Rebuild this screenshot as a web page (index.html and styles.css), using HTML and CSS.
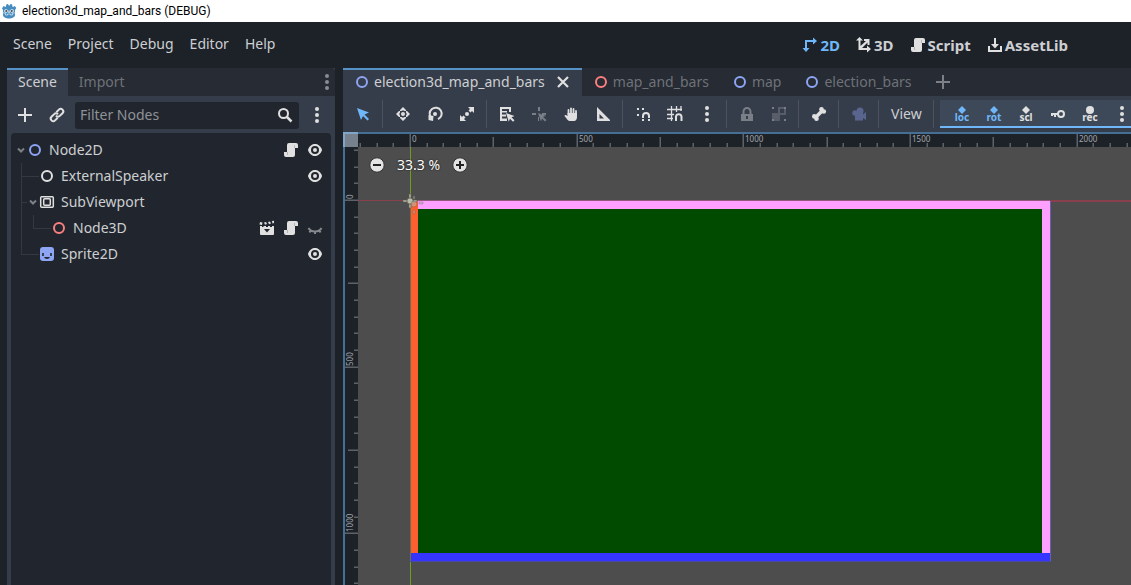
FILE: index.html
```html
<!DOCTYPE html>
<html lang="en">
<head>
<meta charset="utf-8">
<title>election3d_map_and_bars (DEBUG)</title>
<link rel="stylesheet" href="styles.css">
</head>
<body>
<svg class="defs" aria-hidden="true">
  <symbol id="ring" viewBox="0 0 16 16"><circle cx="8" cy="8" r="5" fill="none" stroke="currentColor" stroke-width="2"/></symbol>
  <symbol id="dots" viewBox="0 0 16 16"><g fill="currentColor"><circle cx="8" cy="2" r="2"/><circle cx="8" cy="8" r="2"/><circle cx="8" cy="14" r="2"/></g></symbol>
  <symbol id="plus" viewBox="0 0 16 16"><path d="M7 1h2v6h6v2H9v6H7V9H1V7h6z" fill="currentColor"/></symbol>
  <symbol id="eye" viewBox="0 0 16 16"><path fill="currentColor" fill-rule="evenodd" d="M8 2C5.443 2 2.209 3.948 1.045 7.705a1 1 0 0 0-.014.564C2.168 12.142 5.45 14 8 14s5.832-1.858 6.97-5.73a1 1 0 0 0 0-.541C13.83 3.87 10.556 2 8 2zm0 2a4 4 0 0 1 4 4 4 4 0 0 1-4 4 4 4 0 0 1-4-4 4 4 0 0 1 4-4zm0 2a2 2 0 0 0-2 2 2 2 0 0 0 2 2 2 2 0 0 0 2-2 2 2 0 0 0-2-2z"/></symbol>
  <symbol id="eye-off" viewBox="0 0 16 16"><path fill="none" stroke="currentColor" stroke-width="2" d="M1.500 8C4 12.500 12 12.500 14.500 8M4 9.500L2.500 12.500M12 9.500l1.500 3M8 11v3"/></symbol>
  <symbol id="script" viewBox="0 0 16 16"><path fill="currentColor" d="M6 1a2 2 0 0 0-2 2v7H1v3a2 2 0 0 0 2 2h7a2 2 0 0 0 2-2V6h3V3a2 2 0 0 0-2-2z"/><path d="M4.500 10v3M11.500 3v3" stroke="#b4b6b8" stroke-width="1"/></symbol>
  <symbol id="clapper" viewBox="0 0 16 16"><path fill="currentColor" d="M1 2l2.500.5-.5 2.500L.5 4.500zM5 2.500l2-.5 1 2-2 .7zM9 2l2-.5 1 2-2 .7zM13 1l2-.3V3l-1.500.5zM1 6h14v8a1 1 0 0 1-1 1H2a1 1 0 0 1-1-1z"/><path fill="#21262e" d="M3 6h2l-1 1H3zM7 6h2v1H7zM11 6h2v1h-2zM5 9h6l-3 3.500z"/></symbol>
  <symbol id="arrow" viewBox="0 0 14 14"><path d="M4 5.500l3 3 3-3" fill="none" stroke="currentColor" stroke-width="2"/></symbol>
  <symbol id="pointer" viewBox="0 0 16 16"><path fill="currentColor" d="M2 2l12 4.500-4.500 2L14 13l-1.500 1.500L8 10l-2 4z"/></symbol>
</svg>

<header class="titlebar">
  <svg class="logo" viewBox="0 0 16 16"><path fill="#478cbf" d="M1 5.500L2.500 3l2 1L5 3.500 5.200 1.500 7 1l.8 1.500h.8L9.500 1l1.700.5.2 2 .6.5 1.800-1L15.300 5 14 7v5c0 2-3 3.500-6 3.500S2 14 2 12V7z"/><path d="M1.500 9.500l3 1v1.500h2v-1h3v1h2v-1.500l3-1" stroke="#d4e5f2" fill="none" stroke-width=".8"/><circle cx="5" cy="8" r="1.800" fill="#fff"/><circle cx="11" cy="8" r="1.800" fill="#fff"/><circle cx="5.200" cy="8" r="1" fill="#414042"/><circle cx="10.800" cy="8" r="1" fill="#414042"/><path d="M8 7.500V10" stroke="#fff"/></svg>
  <span>election3d_map_and_bars (DEBUG)</span>
</header>

<div class="topbar">
  <nav class="menus">
    <button>Scene</button><button>Project</button><button>Debug</button><button>Editor</button><button>Help</button>
  </nav>
  <div class="modes">
    <button class="active"><svg class="icon" viewBox="0 0 16 16"><path fill="currentColor" d="M3 3h8V.5L15 4l-4 3.500V5H5v6h2.500L4 15 .5 11H3z"/></svg>2D</button>
    <button><svg class="icon" viewBox="0 0 16 16"><path fill="currentColor" d="M3.500 0L7 3.500H4.500v5.600L10 4H8V2h5.500v6h-2V5.500L6 11h5V8.500l4 3.500-4 3.500V13H2.500V3.500H0z"/></svg>3D</button>
    <button><svg class="icon"><use href="#script"/></svg>Script</button>
    <button><svg class="icon" viewBox="0 0 16 16"><path fill="currentColor" d="M7 1h2v6h3l-4 4.500L4 7h3zM1 9h2v4h10V9h2v6H1z"/></svg>AssetLib</button>
  </div>
</div>

<main class="workspace">
  <section class="dock">
    <div class="tabs">
      <button class="tab selected">Scene</button>
      <button class="tab">Import</button>
      <button class="tabs-menu" aria-label="Dock options"><svg class="icon"><use href="#dots"/></svg></button>
    </div>
    <div class="dock-tools">
      <button class="tool" aria-label="Add node"><svg class="icon"><use href="#plus"/></svg></button>
      <button class="tool" aria-label="Instance scene"><svg class="icon" viewBox="0 0 16 16"><g fill="none" stroke="currentColor" stroke-width="2"><path d="M7.300 5.200l2.600-2.600a2.500 2.500 0 0 1 3.600 3.600l-2.700 2.700a2.500 2.500 0 0 1-3.800-.2"/><path d="M8.700 10.800l-2.600 2.600a2.500 2.500 0 0 1-3.600-3.600l2.700-2.700a2.500 2.500 0 0 1 3.800.2"/></g></svg></button>
      <label class="filter"><input type="text" placeholder="Filter Nodes" aria-label="Filter Nodes"><svg class="icon" viewBox="0 0 16 16"><circle cx="6.500" cy="6.500" r="4.500" fill="none" stroke="currentColor" stroke-width="2"/><path d="M9.500 9.500l5 5" stroke="currentColor" stroke-width="2.500"/></svg></label>
      <button class="tool" aria-label="Scene options"><svg class="icon"><use href="#dots"/></svg></button>
    </div>
    <ul class="tree">
      <li>
        <div class="row"><svg class="fold"><use href="#arrow"/></svg><svg class="icon blue"><use href="#ring"/></svg><span>Node2D</span><svg class="icon"><use href="#script"/></svg><svg class="icon"><use href="#eye"/></svg></div>
        <ul>
          <li><div class="row"><i class="fold"></i><svg class="icon"><use href="#ring"/></svg><span>ExternalSpeaker</span><svg class="icon"><use href="#eye"/></svg></div></li>
          <li class="parent">
            <div class="row"><svg class="fold"><use href="#arrow"/></svg><svg class="icon" viewBox="0 0 16 16"><g fill="none" stroke="currentColor" stroke-width="1.500"><rect x="1.700" y="2.700" width="12.600" height="10.600" rx="1"/><rect x="4.700" y="4.700" width="6.600" height="6.600" rx="1"/></g></svg><span>SubViewport</span></div>
            <ul>
              <li><div class="row"><i class="fold"></i><svg class="icon red"><use href="#ring"/></svg><span>Node3D</span><svg class="icon"><use href="#clapper"/></svg><svg class="icon"><use href="#script"/></svg><svg class="icon dim"><use href="#eye-off"/></svg></div></li>
            </ul>
          </li>
          <li><div class="row"><i class="fold"></i><svg class="icon blue" viewBox="0 0 16 16"><rect x="1" y="1" width="14" height="14" rx="3" fill="currentColor"/><path d="M4 7v3M12 7v3" stroke="#21262e" stroke-width="1.600"/><path d="M5 11c1 2.500 5 2.500 6 0z" fill="#21262e"/></svg><span>Sprite2D</span><svg class="icon"><use href="#eye"/></svg></div></li>
        </ul>
      </li>
    </ul>
  </section>

  <section class="editor">
    <div class="tabs">
      <button class="tab selected"><svg class="icon blue"><use href="#ring"/></svg>election3d_map_and_bars<svg class="icon close" viewBox="0 0 16 16"><path d="M3 3l10 10M13 3L3 13" stroke="currentColor" stroke-width="2.200"/></svg></button>
      <button class="tab"><svg class="icon red"><use href="#ring"/></svg>map_and_bars</button>
      <button class="tab"><svg class="icon blue"><use href="#ring"/></svg>map</button>
      <button class="tab"><svg class="icon blue"><use href="#ring"/></svg>election_bars</button>
      <button class="tab" aria-label="New tab"><svg class="icon"><use href="#plus"/></svg></button>
    </div>
    <div class="tools">
      <button class="tool on" aria-label="Select"><svg class="icon"><use href="#pointer"/></svg></button>
      <hr>
      <button class="tool" aria-label="Move"><svg class="icon" viewBox="0 0 16 16"><g fill="currentColor"><circle cx="8" cy="8" r="2"/><path d="M8 1l3 3v1H9.500L8 4.200 6.500 5H5V4zM8 15l-3-3v-1h1.500l1.500.8 1.500-.8H11v1zM1 8l3-3h1v1.500L4.200 8 5 9.500V11H4zM15 8l-3 3h-1V9.500l.8-1.500-.8-1.500V5h1z"/></g></svg></button>
      <button class="tool" aria-label="Rotate"><svg class="icon" viewBox="0 0 16 16"><path d="M4.500 12A6 6 0 1 1 11 13.200" fill="none" stroke="currentColor" stroke-width="2"/><path d="M1.500 9l5 1-.5 5-4.500-1z" fill="currentColor"/><circle cx="8" cy="8" r="2" fill="currentColor"/></svg></button>
      <button class="tool" aria-label="Scale"><svg class="icon" viewBox="0 0 16 16"><g fill="currentColor"><circle cx="8" cy="8" r="2"/><path d="M9 1h6v6l-2-2-1.500 1.500-2-2L11 3zM7 15H1V9l2 2 1.500-1.500 2 2L5 13z"/></g></svg></button>
      <hr>
      <button class="tool" aria-label="List select"><svg class="icon" viewBox="0 0 16 16"><path fill="currentColor" d="M1 1h11v2H1zM1 3h2v12H1zM10 3h2v3h-2zM3 5h5v1.500H3zM3 8.500h4v2H3zM3 12.500h5V15H3z"/><path d="M7 7l8.500 3-3 1.200 3 3-1.500 1.500-3-3-1.200 3z" fill="currentColor"/></svg></button>
      <button class="tool off" aria-label="Pivot"><svg class="icon" viewBox="0 0 16 16"><path fill="currentColor" d="M7 1h2v4H7zM1 7h4v2H1zM11 7h4v2h-4zM7 11h1v4H7zM7 7l8 3-3 1 3.500 3-1.500 1.500-3-3-1 3z"/></svg></button>
      <button class="tool" aria-label="Pan"><svg class="icon" viewBox="0 0 16 16"><path d="M5.500 8V4M8 8V2.500M10.500 8V3M13 8.500V5" stroke="currentColor" stroke-width="1.800" stroke-linecap="round"/><path fill="currentColor" d="M4.500 7H14v4c0 2-1 4-3 4H7c-2 0-3-2-5.500-5 0-1.500 1.500-1.500 3 0z"/></svg></button>
      <button class="tool" aria-label="Ruler"><svg class="icon" viewBox="0 0 16 16"><path fill="currentColor" fill-rule="evenodd" d="M2 1l13 13v1H2zM4.500 8v4.500H9z"/></svg></button>
      <hr>
      <button class="tool" aria-label="Smart snap"><svg class="icon" viewBox="0 0 16 16"><path fill="currentColor" d="M2 2h2v2H2zM7 2h2v2H7zM2 8h2v2H2zM7 13h2v2H7zM13 13h2v2h-2z"/><path d="M8 12v-2a3 3 0 0 1 6 0v2" fill="none" stroke="currentColor" stroke-width="2"/></svg></button>
      <button class="tool" aria-label="Grid snap"><svg class="icon" viewBox="0 0 16 16"><path d="M4.500 0v15M9.500 0v6M14 0v5M0 3.500h15M0 8.500h7M0 12.500h6" stroke="currentColor" stroke-width="1.300"/><path d="M9 15v-4.500a2.800 2.800 0 0 1 5.500 0V15" fill="none" stroke="currentColor" stroke-width="2"/></svg></button>
      <button class="tool" aria-label="Snap options"><svg class="icon"><use href="#dots"/></svg></button>
      <hr>
      <button class="tool off" aria-label="Lock"><svg class="icon" viewBox="0 0 16 16"><path fill="currentColor" fill-rule="evenodd" d="M8 1a4.500 4.500 0 0 0-4.500 5v2H2v7h12V8h-1.500V6A4.500 4.500 0 0 0 8 1zm0 2a2.500 2.500 0 0 1 2.500 3v2h-5V6A2.500 2.500 0 0 1 8 3zm-1 7h2v3H7z"/></svg></button>
      <button class="tool off" aria-label="Group"><svg class="icon" viewBox="0 0 16 16"><path fill="currentColor" fill-rule="evenodd" opacity=".5" d="M7 1h6v2h2v6H9v6H3v-2H1V7h6zM9 3v4h4V3z"/><path fill="currentColor" d="M1 1h2v2H1zM13 1h2v2h-2zM1 13h2v2H1zM13 13h2v2h-2z"/></svg></button>
      <hr>
      <button class="tool" aria-label="Skeleton"><svg class="icon" viewBox="0 0 16 16"><path d="M4.500 11.500l7-7" stroke="currentColor" stroke-width="3.500"/><g fill="currentColor"><circle cx="3.300" cy="10.400" r="2.300"/><circle cx="5.500" cy="12.800" r="2.300"/><circle cx="10.500" cy="3.200" r="2.300"/><circle cx="12.800" cy="5.500" r="2.300"/></g></svg></button>
      <hr>
      <button class="tool camera" aria-label="Override camera"><svg class="icon" viewBox="0 0 16 16"><g fill="currentColor"><circle cx="9" cy="5" r="3.500"/><circle cx="4" cy="7" r="2.700"/><path d="M4 7h8v1.500L15 6v8l-3-2v2.500H4z"/></g></svg></button>
      <hr>
      <button class="view">View</button>
      <hr>
      <div class="keying">
        <button class="tool on" aria-label="Insert location"><svg class="icon" viewBox="0 0 16 16"><path d="M8 0l4 4-4 4-4-4z" fill="currentColor"/><text x="8" y="15">loc</text></svg></button>
        <button class="tool on" aria-label="Insert rotation"><svg class="icon" viewBox="0 0 16 16"><path d="M8 0l4 4-4 4-4-4z" fill="currentColor"/><text x="8" y="15">rot</text></svg></button>
        <button class="tool" aria-label="Insert scale"><svg class="icon" viewBox="0 0 16 16"><path d="M8 0l4 4-4 4-4-4z" fill="currentColor"/><text x="8" y="15">scl</text></svg></button>
        <button class="tool" aria-label="Insert key"><svg class="icon" viewBox="0 0 16 16"><circle cx="11" cy="8" r="3" fill="none" stroke="currentColor" stroke-width="2"/><path fill="currentColor" d="M1 7h7v2H6v2H4V9H3v1H1z"/></svg></button>
        <button class="tool" aria-label="Auto record"><svg class="icon" viewBox="0 0 16 16"><circle cx="8" cy="4" r="4" fill="currentColor"/><text x="8" y="15">rec</text></svg></button>
        <button class="tool" aria-label="Animation options"><svg class="icon"><use href="#dots"/></svg></button>
      </div>
    </div>
    <div class="viewport">
      <svg class="canvas" aria-label="2D canvas">
        <rect x="68" y="69" width="639" height="8" fill="#ff9fff"/>
        <rect x="699" y="69" width="8" height="352" fill="#ff9fff"/>
        <rect x="67" y="69" width="8" height="352" fill="#ff5f2f"/>
        <rect x="75" y="77" width="624" height="344" fill="#004b00"/>
        <rect x="67" y="421" width="640" height="8" fill="#3535ff"/>
        <rect x="707" y="69" width="1" height="361" fill="#6660a8"/>
        <rect x="67" y="429" width="641" height="1" fill="#4a48a0"/>
        <rect x="67" y="14" width="1" height="54" fill="#6f9e1c"/>
        <rect x="67" y="69" width="1" height="360" fill="#6f6f4c"/>
        <rect x="67" y="430" width="1" height="100%" fill="#6f9e1c"/>
        <rect x="15" y="68" width="100%" height="1" fill="#8a3f4c"/>
        <rect x="67" y="68" width="640" height="1" fill="#93587c"/>
        <rect x="708" y="68" width="100%" height="2" fill="#8a3f4c"/>
        <g fill="#b9b9a9" stroke="#5c5c50" stroke-width=".6">
          <path d="M66 62h2v4h-2zM66 72h2v4h-2zM60 68h4v2h-4zM70 68h4v2h-4z"/><circle cx="67" cy="69" r="3"/>
          <g opacity=".55"><path d="M70 64h2v3h-2zM70 78h2v4h-2zM76 70h4v2h-4z"/><circle cx="71" cy="72" r="3"/></g>
        </g>
        <rect width="100%" height="15" fill="#1d2229"/>
        <rect width="15" height="100%" fill="#1d2229"/>
        <g id="ruler"></g>
        <rect width="100%" height="2" fill="#456f94"/>
        <rect width="2" height="100%" fill="#456f94"/>
        <rect width="15" height="15" fill="#76818d"/>
        <path d="M0 1h15M1 0v15" stroke="#7fa6c9" stroke-width="2"/>
      </svg>
      <div class="zoom">
        <button aria-label="Zoom out"><svg class="icon" viewBox="0 0 16 16"><circle cx="8" cy="8" r="7.200" fill="#e3e3e3" stroke="#333"/><path d="M4 8h8" stroke="#222" stroke-width="2"/></svg></button>
        <button class="percent">33.3 %</button>
        <button aria-label="Zoom in"><svg class="icon" viewBox="0 0 16 16"><circle cx="8" cy="8" r="7.200" fill="#e3e3e3" stroke="#333"/><path d="M4 8h8M8 4v8" stroke="#222" stroke-width="2"/></svg></button>
      </div>
    </div>
  </section>
</main>
<script src="ruler.js"></script>
</body>
</html>
```

FILE: styles.css
```css
* { box-sizing: border-box; }

body {
  margin: 0;
  height: 100vh;
  display: flex;
  flex-direction: column;
  overflow: hidden;
  background: #1d2229;
  color: #cdcfd2;
  font: 14px/20px "Noto Sans", "Open Sans", sans-serif;
}

button {
  margin: 0;
  padding: 0;
  border: 0;
  background: none;
  color: inherit;
  font: inherit;
  white-space: nowrap;
}

.defs { position: absolute; width: 0; height: 0; }
.icon { display: block; width: 16px; height: 16px; flex: none; color: #e0e0e0; overflow: visible; }
.blue { color: #8da5f3; }
.red { color: #fc7f7f; }
.dim { color: #85888d; }

.titlebar {
  display: flex;
  align-items: center;
  gap: 5px;
  height: 22px;
  flex: none;
  padding-left: 1px;
  background: #fff;
  color: #000;
  font: 12px/16px Roboto, "Open Sans", sans-serif;
}
.logo { width: 16px; height: 16px; }

.topbar {
  display: flex;
  align-items: center;
  justify-content: space-between;
  height: 46px;
  flex: none;
  padding: 0 63px 2px 13px;
}
.menus { display: flex; gap: 16px; }
.modes { display: flex; gap: 16px; padding-top: 2px; font-size: 15px; font-weight: 700; }
.modes button { display: flex; align-items: center; gap: 2px; }
.modes .active, .modes .active .icon { color: #70b7fa; }

.workspace { display: flex; flex: 1; gap: 8px; min-height: 0; padding-left: 7px; }

.dock {
  display: flex;
  flex-direction: column;
  flex: none;
  width: 328px;
  padding: 0 4px;
  background: #363d4a;
}
.dock .tabs { margin: 0 -4px; border-radius: 0 4px 0 0; }

.tabs { display: flex; height: 28px; flex: none; background: #262b34; }
.tab {
  display: flex;
  align-items: center;
  gap: 4px;
  padding: 0 11px;
  color: #6e7278;
}
.editor .tab:not(.selected) { padding-right: 12px; }
.tab.selected { background: #363d4a; color: #cdcfd2; box-shadow: inset 0 2px #5792c6; }
.tab .close { margin-left: 6px; }
.tab[aria-label] .icon { color: #7d8187; }
.tabs-menu { margin-left: auto; }
.tabs-menu .icon { color: #8a8d92; }

.dock-tools { display: flex; align-items: center; gap: 4px; padding: 5px 0 4px; }
.tool { display: grid; place-items: center; width: 28px; height: 28px; flex: none; }
.filter {
  display: flex;
  align-items: center;
  flex: 1;
  min-width: 0;
  height: 27px;
  padding: 0 6px 1px 5px;
  border-radius: 3px;
  background: #21262e;
}
.filter input { flex: 1; min-width: 0; padding: 0; border: 0; outline: 0; background: none; color: inherit; font: inherit; }
.filter input::placeholder { color: #8f9297; opacity: 1; }

.tree { flex: 1; margin: 0; padding: 4px 0; border-radius: 4px 4px 0 0; background: #21262e; list-style: none; }
.tree ul { margin: 0; padding: 0 0 0 12px; list-style: none; }
.tree li { position: relative; }
.row { display: flex; align-items: center; gap: 8px; height: 26px; padding: 0 8px 0 3px; }
.row span { flex: 1; }
.row .fold { width: 14px; height: 14px; flex: none; margin-right: -9px; color: #7c8087; }
.row .fold + .icon { margin-right: -2px; }
.tree ul > li::before,
.tree ul > li::after { content: ""; position: absolute; left: -2px; background: #343941; }
.tree ul > li::before { top: 0; width: 1px; height: 100%; }
.tree ul > li:last-child::before { height: 13px; }
.tree ul > li::after { top: 13px; width: 18px; height: 1px; }
.tree ul > li.parent::after { width: 6px; }

.editor { display: flex; flex-direction: column; flex: 1; min-width: 0; background: #363d4a; }
.tools { display: flex; align-items: center; gap: 4px; padding: 4px 0 4px 6px; overflow: hidden; }
.tools hr { width: 4px; height: 28px; flex: none; margin: 0; border: 0; background: linear-gradient(90deg, transparent 1px, #4c535f 1px 2px, transparent 2px); }
.tool.on .icon { color: #70b7fa; }
.tool.off .icon { color: #797e87; }
.tool.camera .icon { color: #59658e; }
.view { flex: none; padding: 0 6px; }
.keying {
  display: flex;
  gap: 4px;
  flex: 1 0 auto;
  padding-left: 8px;
  background: #3d4959;
  box-shadow: inset 0 -2px #70b7fa;
}
.keying text { fill: currentColor; font: 700 10px "Noto Sans", sans-serif; text-anchor: middle; }

.viewport { position: relative; flex: 1; min-height: 0; background: #4d4d4d; overflow: hidden; }
.canvas { display: block; width: 100%; height: 100%; }
.canvas text { fill: #a3a6aa; font: 8px "Noto Sans", sans-serif; }
.zoom { position: absolute; left: 26px; top: 23px; display: flex; align-items: center; gap: 12px; }
.percent { color: #fff; text-shadow: 0 0 2px #222, 0 0 1px #222; }
```

FILE: ruler.js
```js
const ruler = document.getElementById("ruler");
const canvas = document.querySelector(".canvas");
const NS = "http://www.w3.org/2000/svg";
const ORIGIN = { x: 67, y: 69 };
const STEP = 50 / 3;
const FILL = "#5d6269";

function add(name, attrs, text) {
  const el = document.createElementNS(NS, name);
  for (const key in attrs) el.setAttribute(key, attrs[key]);
  if (text !== undefined) el.textContent = text;
  ruler.appendChild(el);
}

function draw() {
  const { width, height } = canvas.getBoundingClientRect();
  ruler.replaceChildren();
  for (let i = -4; i * STEP < Math.max(width, height); i++) {
    const major = i % 10 === 0;
    const length = major ? 13 : i % 5 === 0 ? 10 : 4;
    const x = Math.round(ORIGIN.x + i * STEP);
    const y = Math.round(ORIGIN.y + i * STEP) - 1;
    if (x > 15 && x < width) {
      add("rect", { x: x - 0.5, y: 15 - length, width: 1.5, height: length, fill: FILL });
      if (major && x + 24 < width) add("text", { x: x + 2, y: 10 }, i * 50);
    }
    if (y > 15 && y < height) {
      add("rect", { x: 15 - length, y: y - 0.5, width: length, height: 1.5, fill: FILL });
      if (major) add("text", { transform: `translate(10 ${y - 1}) rotate(-90)` }, i * 50);
    }
  }
}

draw();
window.addEventListener("resize", draw);
```
